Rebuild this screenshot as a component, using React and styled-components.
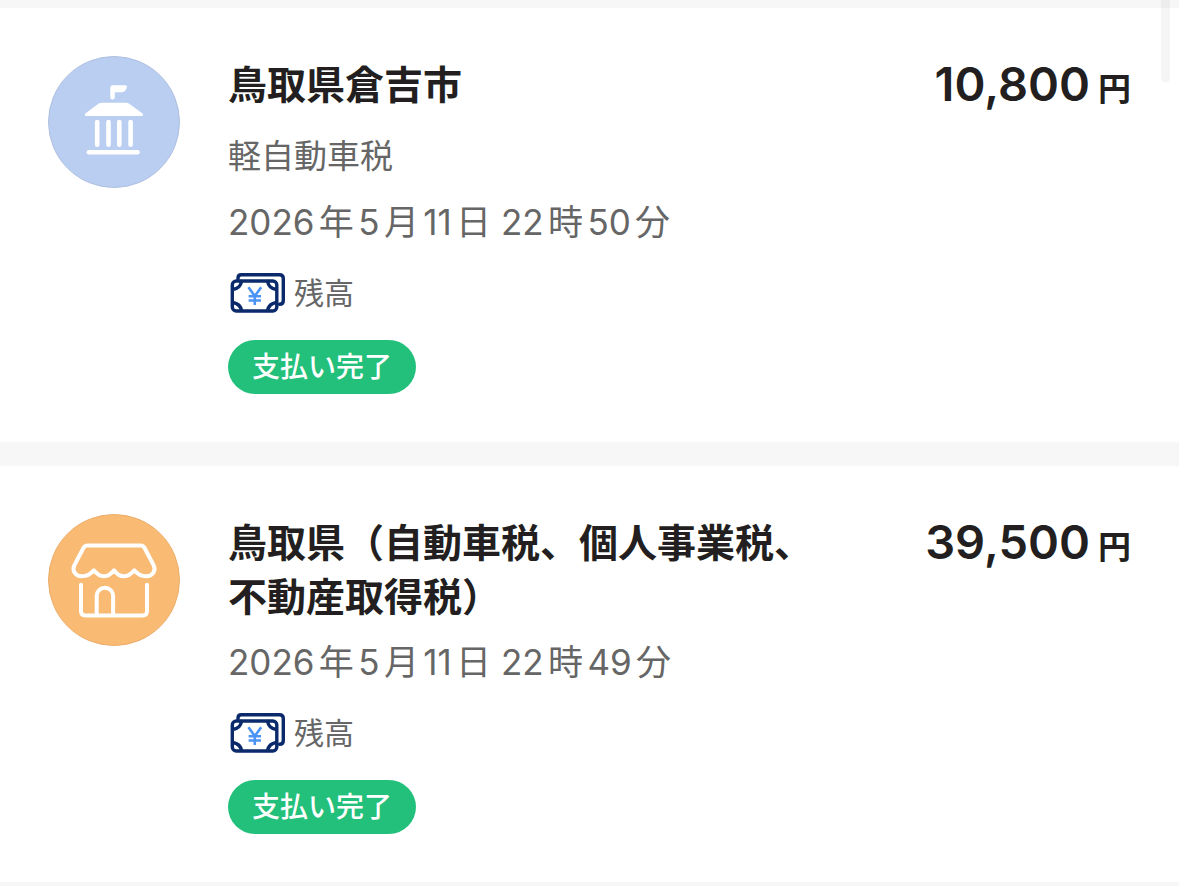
import React from "react";
import styled, { createGlobalStyle } from "styled-components";

const GlobalStyle = createGlobalStyle`
  body {
    margin: 0;
    background: #f7f7f7;
    color: #231f20;
    font-family: Inter, "Noto Sans CJK JP", sans-serif;
  }
`;

const ScrollThumb = styled.div`
  position: absolute;
  top: 0;
  right: 9px;
  width: 9px;
  height: 82px;
  border-radius: 0 0 4px 4px;
  background: rgba(0, 0, 0, 0.04);
`;

const HistoryList = styled.ul`
  display: flex;
  flex-direction: column;
  gap: 24px;
  margin: 0;
  padding: 8px 0 4px;
  list-style: none;
`;

const HistoryItem = styled.li`
  display: grid;
  grid-template-columns: 132px 5fr 2fr;
  column-gap: 48px;
  padding: 48px;
  background: #fff;
`;

const StyledIcon = styled.svg`
  display: block;
  width: 132px;
  height: 132px;
`;

const Details = styled.div`
  display: flex;
  flex-direction: column;
  align-items: flex-start;
  padding-top: 2px;
`;

const Title = styled.h2`
  margin: 0;
  font-size: 39px;
  font-weight: 700;
  line-height: 54px;
`;

const Category = styled.p`
  margin: 20px 0 0;
  color: #666;
  font-size: 33px;
  line-height: 48px;
`;

const PaidAt = styled.time`
  margin-top: ${({ $spacing }) => $spacing}px;
  color: #666;
  font-size: 35px;
  line-height: 48px;
  text-autospace: normal;
`;

const Method = styled.div`
  display: flex;
  align-items: center;
  gap: 8px;
  margin-top: 26px;
  color: #666;
  font-size: 30px;
  line-height: 42px;
`;

const StyledBills = styled.svg`
  display: block;
  width: 58px;
  height: 42px;
`;

const Status = styled.span`
  margin-top: 26px;
  padding: 0 24px;
  border-radius: 27px;
  background: #23c07b;
  color: #fff;
  font-size: 28px;
  font-weight: 500;
  line-height: 54px;
`;

const Amount = styled.p`
  margin: 0;
  font-size: 47px;
  font-weight: 600;
  line-height: 56px;
  text-align: right;
  white-space: nowrap;
`;

const Unit = styled.span`
  margin-left: 8px;
  font-size: 33px;
  font-weight: 700;
`;

const GovernmentIcon = () => (
  <StyledIcon viewBox="0 0 132 132" aria-hidden="true">
    <circle cx="66" cy="66" r="65.5" fill="#bacef2" stroke="#aebfe0" />
    <path
      d="M62.3 31.5Q62.3 29.2 64.6 29.2H77.2Q79.4 29.2 78.8 31.2Q77.7 36.2 73.4 36.2H66.8V41.3A2.25 2.25 0 0 1 62.3 41.3Z"
      fill="#fff"
    />
    <path
      d="M50.8 47.6Q51.9 46.8 53.4 46.8H78.2Q79.7 46.8 80.9 47.6L94.2 57.2Q95.6 58.4 94.6 60H37.2Q36.3 58.3 37.7 57.2Z"
      fill="#fff"
    />
    <path
      d="M49.2 66V88.8M60.5 66V88.8M71.3 66V88.8M82.6 66V88.8"
      stroke="#fff"
      strokeWidth="4.6"
      strokeLinecap="round"
    />
    <path
      d="M40.9 96.3H89.5"
      stroke="#fff"
      strokeWidth="4.6"
      strokeLinecap="round"
    />
  </StyledIcon>
);

const ShopIcon = () => (
  <StyledIcon viewBox="0 0 132 132" aria-hidden="true">
    <circle cx="66" cy="66" r="65.5" fill="#f9ba74" stroke="#ebae6b" />
    <g
      fill="none"
      stroke="#fff"
      strokeWidth="4"
      strokeLinecap="round"
      strokeLinejoin="round"
    >
      <path d="M39.5 31.5H92.5Q95.3 31.5 96.6 34L105.7 51.4C108.4 57 104.2 62.3 98.5 62.3C92.5 62.3 89.2 60 86.3 56.3C83.3 60 80.2 62.3 75.8 62.3C71.5 62.3 68.7 60 66 56.3C63.2 60 60.4 62.3 56 62.3C51.5 62.3 48.7 60 45.8 56.3C43 60 39.5 62.3 33.5 62.3C27.8 62.3 23.6 57 26.3 51.4L35.4 34Q36.7 31.5 39.5 31.5Z" />
      <path d="M33 70.7V97Q33 101.5 37.5 101.5H94.5Q99 101.5 99 97V70.7" />
      <path d="M48.7 101V82A8.2 8.2 0 0 1 65.1 82V101" />
    </g>
  </StyledIcon>
);

const BillsIcon = () => (
  <StyledBills viewBox="0 0 58 42" fill="none" aria-hidden="true">
    <g stroke="#0b2a6b" strokeWidth="3.4" strokeLinecap="round">
      <path d="M10 7V6Q10 2.8 13.2 2.8H51.5Q55.3 2.8 55.3 6.6V28.4Q55.3 32.2 51.5 32.2" />
      <rect x="4.3" y="9" width="44.5" height="30" rx="4" />
      <path d="M13.5 9.5Q12.4 16.2 4.8 17.5M39.6 9.5Q40.7 16.2 48.3 17.5M13.5 38.5Q12.4 31.8 4.8 30.5M39.6 38.5Q40.7 31.8 48.3 30.5" />
    </g>
    <path
      d="M20.4 15.2L26.8 24L33.2 15.2M26.8 24V33M20.6 24.3H33M20.6 28.5H33"
      stroke="#4b94f5"
      strokeWidth="2.6"
    />
  </StyledBills>
);

const payments = [
  {
    id: 1,
    Icon: GovernmentIcon,
    title: "鳥取県倉吉市",
    category: "軽自動車税",
    paidAt: "2026-05-11T22:50",
    paidAtLabel: "2026年5月11日 22時50分",
    amount: "10,800",
  },
  {
    id: 2,
    Icon: ShopIcon,
    title: "鳥取県（自動車税、個人事業税、不動産取得税）",
    paidAt: "2026-05-11T22:49",
    paidAtLabel: "2026年5月11日 22時49分",
    amount: "39,500",
  },
];

const Payment = ({ payment }) => {
  const { Icon, title, category, paidAt, paidAtLabel, amount } = payment;

  return (
    <HistoryItem>
      <Icon />
      <Details>
        <Title>{title}</Title>
        {category && <Category>{category}</Category>}
        <PaidAt dateTime={paidAt} $spacing={category ? 18 : 14}>
          {paidAtLabel}
        </PaidAt>
        <Method>
          <BillsIcon />
          <span>残高</span>
        </Method>
        <Status>支払い完了</Status>
      </Details>
      <Amount>
        {amount}
        <Unit>円</Unit>
      </Amount>
    </HistoryItem>
  );
};

export default function App() {
  return (
    <main lang="ja">
      <GlobalStyle />
      <HistoryList>
        {payments.map((payment) => (
          <Payment key={payment.id} payment={payment} />
        ))}
      </HistoryList>
      <ScrollThumb />
    </main>
  );
}
